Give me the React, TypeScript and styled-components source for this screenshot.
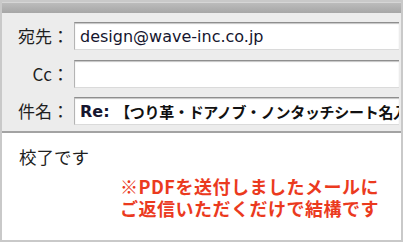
import styled, { createGlobalStyle } from 'styled-components';

const Global = createGlobalStyle`
	html, body {
		margin: 0;
		padding: 0;
		background: #fff;
	}
	body {
		font-family: "Noto Sans CJK JP", "DejaVu Sans", sans-serif;
	}
`;

const Frame = styled.div`
	width: 403px;
	height: 242px;
	box-sizing: border-box;
	border: 2px solid #c9c9c9;
	display: flex;
	flex-direction: column;
	overflow: hidden;
	background: #fff;
`;

const TitleBar = styled.div`
	height: 11px;
	flex: none;
	background: linear-gradient(#bcbcbc, #a6a6a6);
	border-top: 1px solid #d6d6d6;
	box-sizing: border-box;
`;

const Header = styled.div`
	flex: none;
	background: #ececec;
	padding: 9px 2px 6px 0;
	display: flex;
	flex-direction: column;
	gap: 10px;
	border-bottom: 2px solid #a3a3a3;
`;

const Row = styled.div<{ tall?: boolean }>`
	display: flex;
	align-items: center;
	gap: 5px;
	height: 28px;
	margin-top: ${({ tall }) => (tall ? '-1px' : '0')};
`;

const Label = styled.div`
	width: 67px;
	flex: none;
	text-align: right;
	font-family: "Noto Sans CJK JP", sans-serif;
	font-size: 17px;
	color: #1e1e1e;
	line-height: 28px;
	white-space: nowrap;
`;

const Field = styled.div<{ bold?: boolean }>`
	flex: 1;
	height: 100%;
	box-sizing: border-box;
	background: #fff;
	border-top: 1px solid #8e8e8e;
	border-left: 1px solid #b4b4b4;
	border-bottom: 1px solid #dadada;
	box-shadow: inset 0 1px 1px #c4c4c4;
	padding: 0 0 0 5px;
	display: flex;
	align-items: center;
	overflow: hidden;
	white-space: nowrap;
	font-family: "DejaVu Sans", "Noto Sans CJK JP", sans-serif;
	font-size: 16px;
	font-weight: ${({ bold }) => (bold ? 700 : 400)};
	color: #15152e;
`;

const Subject = styled.span`
	font-family: "Noto Sans CJK JP", sans-serif;
	font-size: 15px;
	font-weight: 700;
	color: #111;
	letter-spacing: -0.3px;
`;

const Body = styled.div`
	flex: 1;
	padding: 13px 0 0 17px;
`;

const Message = styled.p`
	margin: 0;
	font-family: "Noto Sans CJK JP", sans-serif;
	font-size: 17.5px;
	line-height: 22px;
	color: #202020;
`;

const Note = styled.p`
	margin: 7px 0 0 101px;
	font-family: "Noto Sans CJK JP", sans-serif;
	font-size: 18px;
	font-weight: 700;
	letter-spacing: 0.5px;
	line-height: 22px;
	color: #eb3a1e;
`;

export default function App() {
	return (
		<>
			<Global />
			<Frame>
				<TitleBar />
				<Header>
					<Row>
						<Label>宛先：</Label>
						<Field>design@wave-inc.co.jp</Field>
					</Row>
					<Row>
						<Label>Cc：</Label>
						<Field />
					</Row>
					<Row tall>
						<Label>件名：</Label>
						<Field bold>
							Re:&nbsp;<Subject>【つり革・ドアノブ・ノンタッチシート名入れ】</Subject>
						</Field>
					</Row>
				</Header>
				<Body>
					<Message>校了です</Message>
					<Note>
						※PDFを送付しましたメールに
						<br />
						ご返信いただくだけで結構です
					</Note>
				</Body>
			</Frame>
		</>
	);
}
